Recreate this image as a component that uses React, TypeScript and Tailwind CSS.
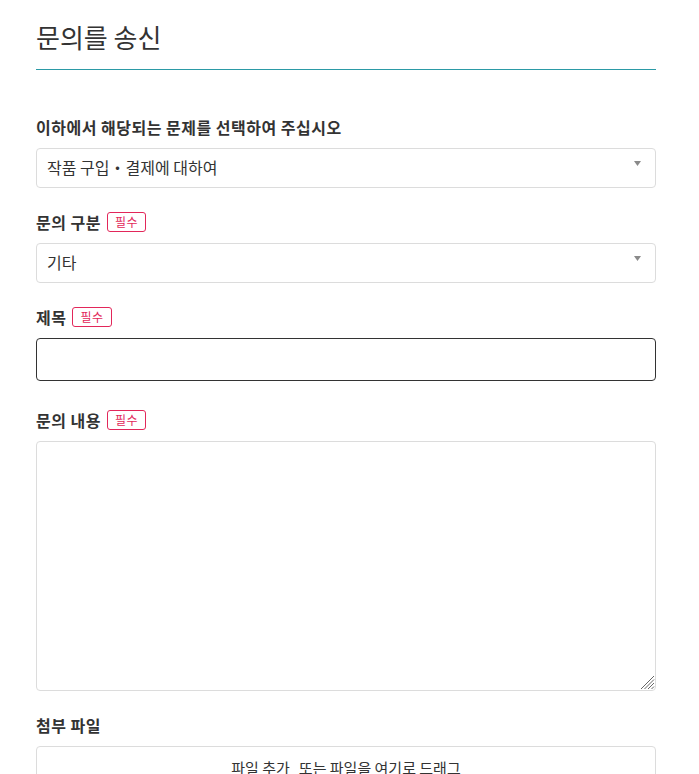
import React from 'react';

const font = { fontFamily: '"Noto Sans CJK KR", "Noto Sans", sans-serif' };

function Required() {
  return (
    <span className="ml-[6px] inline-flex h-[20px] items-center rounded-[3px] border border-[#e2275a] px-[7px] text-[12px] font-normal leading-none tracking-[0.5px] text-[#e2275a]">
      필수
    </span>
  );
}

function Label({ children, required }: { children: React.ReactNode; required?: boolean }) {
  return (
    <div className="flex h-[22px] items-center text-[16px] font-bold leading-[22px] tracking-[0.5px] text-[#333]">
      <span>{children}</span>
      {required && <Required />}
    </div>
  );
}

function FakeSelect({ value }: { value: string }) {
  return (
    <div className="mt-[10px] flex h-[40px] items-center justify-between rounded-[4px] border border-[#dcdcdc] bg-white pb-[3px] pl-[10px] pr-[14px] text-[16px] text-[#333]">
      <span>{value}</span>
      <svg width="7" height="5" viewBox="0 0 7 5" className="-mt-[6px]">
        <path d="M0 0h7L3.5 5z" fill="#8a8a8a" />
      </svg>
    </div>
  );
}

export default function App() {
  return (
    <div className="min-h-[774px] bg-white" style={font}>
      <div className="mx-[36px] w-[620px]">
        <h1 className="border-b border-[#2b9aa6] pb-[14px] pt-[19px] text-[26px] font-normal leading-[36px] text-[#333]">
          문의를 송신
        </h1>

        <div className="mt-[46px]">
          <Label>이하에서 해당되는 문제를 선택하여 주십시오</Label>
          <FakeSelect value="작품 구입・결제에 대하여" />
        </div>

        <div className="mt-[23px]">
          <Label required>문의 구분</Label>
          <FakeSelect value="기타" />
        </div>

        <div className="mt-[23px]">
          <Label required>제목</Label>
          <input
            type="text"
            className="mt-[10px] block h-[43px] w-full rounded-[4px] border border-[#333] px-[10px] text-[15px] outline-none"
          />
        </div>

        <div className="mt-[28px]">
          <Label required>문의 내용</Label>
          <div className="relative mt-[10px]">
            <textarea className="block h-[250px] w-full resize-none rounded-[4px] border border-[#dcdcdc] p-[10px] text-[15px] outline-none" />
            <svg
              width="15"
              height="15"
              viewBox="0 0 15 15"
              className="pointer-events-none absolute bottom-[1px] right-[1px]"
            >
              <path d="M14 1L1 14M14 4.5L4.5 14M14 8L8 14M14 11.5L11.5 14" stroke="#666" strokeWidth="1" />
            </svg>
          </div>
        </div>

        <div className="mt-[23px]">
          <Label>첨부 파일</Label>
          <div className="mt-[10px] flex h-[60px] items-start justify-center rounded-[4px] border border-[#dcdcdc] pt-[10px] text-[15px] text-[#333]">
            <span>파일 추가</span>
            <span className="ml-[9px]">또는 파일을 여기로 드래그</span>
          </div>
        </div>
      </div>
    </div>
  );
}
